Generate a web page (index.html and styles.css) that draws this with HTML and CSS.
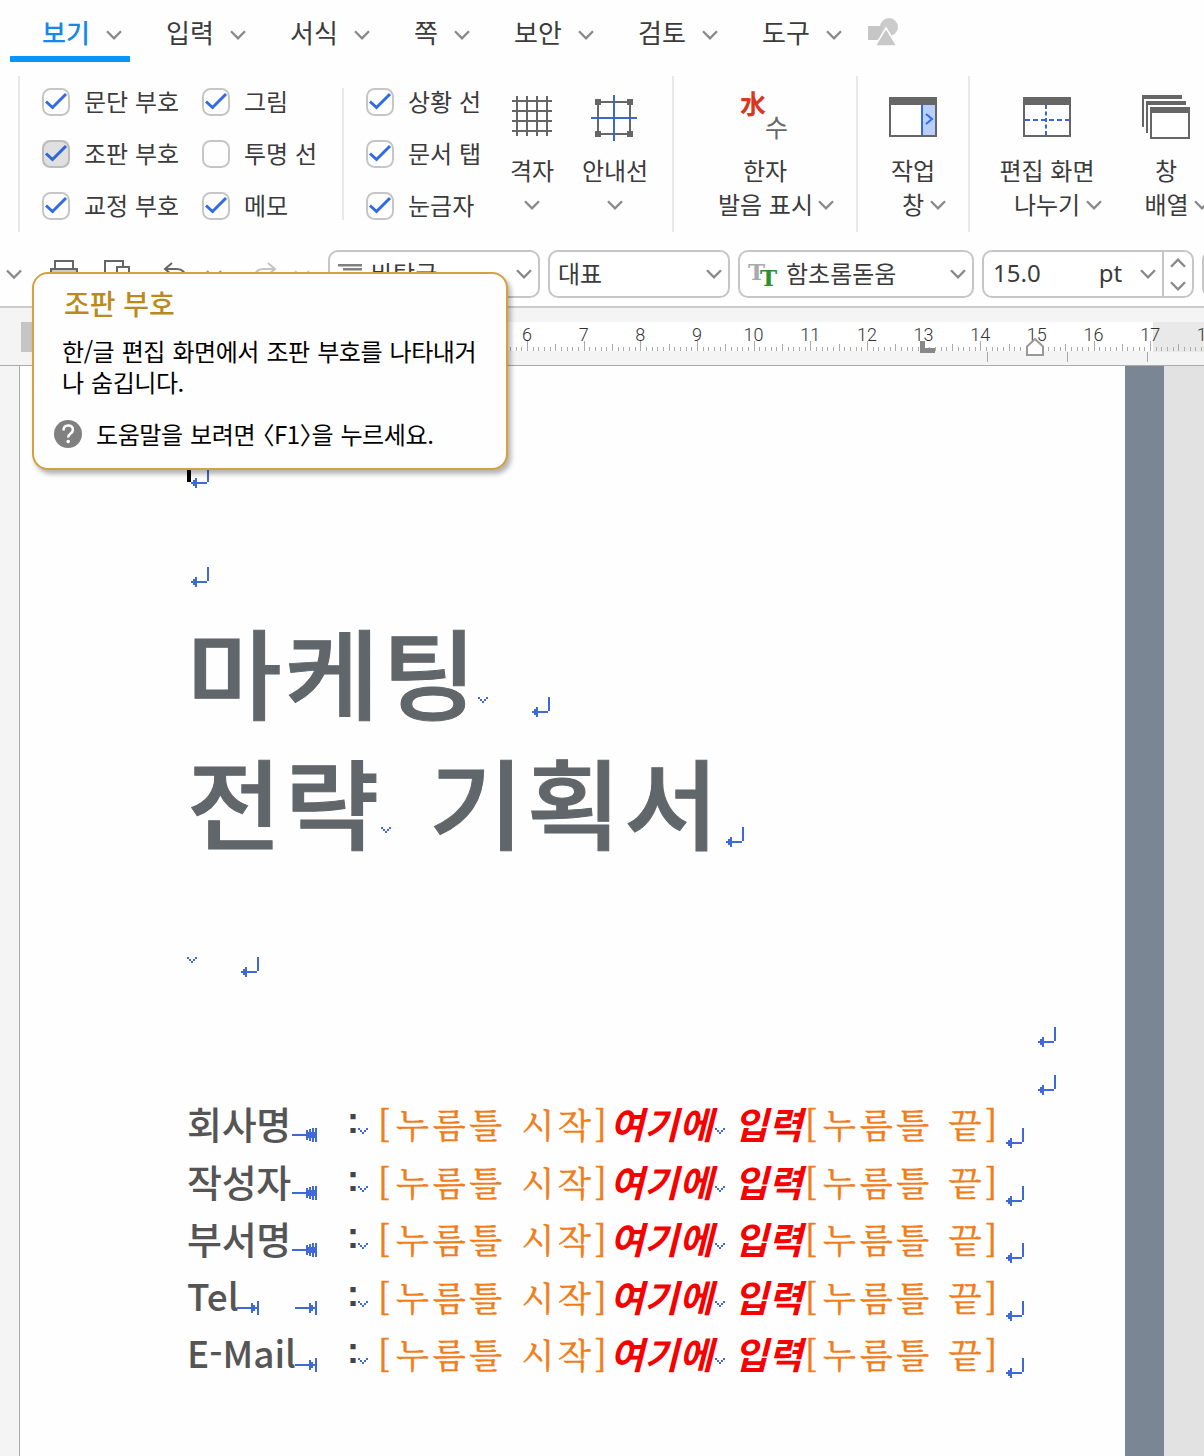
FILE: index.html
```html
<!DOCTYPE html>
<html lang="ko">
<head>
<meta charset="utf-8">
<title>한글</title>
<link rel="stylesheet" href="styles.css">
</head>
<body>
<svg class="defs" width="0" height="0">
  <symbol id="chev" viewBox="0 0 16 10"><path d="M1 1.3 8 8.3 15 1.3" fill="none" stroke="#888" stroke-width="2.3"/></symbol>
  <symbol id="box" viewBox="0 0 28 28"><rect x="1" y="1" width="26" height="26" rx="7.5" fill="none" stroke="#c6c6c6" stroke-width="2"/></symbol>
  <symbol id="check" viewBox="0 0 28 28"><path d="M4 13.5 10.5 19.5 24 6" fill="none" stroke="#2f6be8" stroke-width="3"/></symbol>
  <symbol id="ret" viewBox="0 0 18 20"><path d="M16 0h2v14h-2zM6 14h10v2H6zM0 14h2v-2h2v-2h2v10H4v-2H2v-2H0z" fill="#3f68d8"/></symbol>
  <symbol id="sp" viewBox="0 0 10 6"><path d="M0 0h2v2H0zM2 2h2v2H2zM4 4h2v2H4zM6 2h2v2H6zM8 0h2v2H8z" fill="#3f68d8"/></symbol>
  <symbol id="tab" viewBox="0 0 22 14"><path d="M0 6h20v2H0zM20 0h2v14h-2zM14 2h2v2h2v2h1v2h-1v2h-2v2h-2z" fill="#3f68d8"/></symbol>
  <symbol id="tabs" viewBox="0 0 25 14"><path d="M0 6h25v2H0zM23 0h2v14h-2zM20 0h2v14h-2zM14 2h2v10h-2zM17 1h2v12h-2zM16 4h7v6h-7z" fill="#3f68d8"/></symbol>
</svg>

<nav class="menu">
  <div class="tab active"><span>보기</span><svg class="chev"><use href="#chev"/></svg></div>
  <div class="tab"><span>입력</span><svg class="chev"><use href="#chev"/></svg></div>
  <div class="tab"><span>서식</span><svg class="chev"><use href="#chev"/></svg></div>
  <div class="tab narrow"><span>쪽</span><svg class="chev"><use href="#chev"/></svg></div>
  <div class="tab"><span>보안</span><svg class="chev"><use href="#chev"/></svg></div>
  <div class="tab"><span>검토</span><svg class="chev"><use href="#chev"/></svg></div>
  <div class="tab"><span>도구</span><svg class="chev"><use href="#chev"/></svg></div>
  <svg class="shapes" viewBox="0 0 30 28"><circle cx="21" cy="9" r="9" fill="#cbcbcb"/><path d="M0 8h14v14H0z" fill="#c6c6c6"/><path d="M18 10 29 28H7z" fill="#c8c8c8" stroke="#fff" stroke-width="1.500"/></svg>
</nav>

<section class="ribbon">
  <div class="group checks">
    <div class="col c1">
      <label><svg class="cb"><use href="#box"/><use href="#check"/></svg>문단 부호</label>
      <label><svg class="cb hover"><use href="#box"/><use href="#check"/></svg>조판 부호</label>
      <label><svg class="cb"><use href="#box"/><use href="#check"/></svg>교정 부호</label>
    </div>
    <div class="col c2">
      <label><svg class="cb"><use href="#box"/><use href="#check"/></svg>그림</label>
      <label><svg class="cb"><use href="#box"/></svg>투명 선</label>
      <label><svg class="cb"><use href="#box"/><use href="#check"/></svg>메모</label>
    </div>
    <div class="col c3">
      <label><svg class="cb"><use href="#box"/><use href="#check"/></svg>상황 선</label>
      <label><svg class="cb"><use href="#box"/><use href="#check"/></svg>문서 탭</label>
      <label><svg class="cb"><use href="#box"/><use href="#check"/></svg>눈금자</label>
    </div>
    <div class="btn grid">
      <svg width="48" height="48"><path d="M4 9h40M4 19h40M4 29h40M4 39h40M9 4v40M19 4v40M29 4v40M39 4v40" stroke="#666" stroke-width="2"/></svg>
      <p>격자</p><p><svg class="chev"><use href="#chev"/></svg></p>
    </div>
    <div class="btn guide">
      <svg width="48" height="48"><path d="M7 10h32v32H7z" fill="none" stroke="#666" stroke-width="2"/><path d="M4 7h6v6H4zM36 7h6v6h-6zM4 39h6v6H4zM36 39h6v6h-6z" fill="#666"/><path d="M0 26h46M23 3v46" stroke="#3a66d8" stroke-width="2"/></svg>
      <p>안내선</p><p><svg class="chev"><use href="#chev"/></svg></p>
    </div>
  </div>
  <div class="group hanja">
    <div class="btn">
      <svg width="52" height="48"><text x="1" y="22" class="han">水</text><text x="26" y="45" class="su">수</text></svg>
      <p>한자</p><p class="wide">발음 표시<svg class="chev"><use href="#chev"/></svg></p>
    </div>
  </div>
  <div class="group work">
    <div class="btn">
      <svg width="48" height="48"><path d="M1 6h46v38H1z" fill="#fff" stroke="#666" stroke-width="2"/><path d="M32 12h14v31H32z" fill="#b7cffb"/><path d="M0 5h48v8H0z" fill="#666"/><path d="M33 13v30" stroke="#3a66d8" stroke-width="2"/><path d="M37 22l6 5-6 5" fill="none" stroke="#2f6be8" stroke-width="2"/></svg>
      <p>작업</p><p class="second">창<svg class="chev"><use href="#chev"/></svg></p>
    </div>
  </div>
  <div class="group windows">
    <div class="btn split">
      <svg width="48" height="48"><path d="M1 6h46v38H1z" fill="#fff" stroke="#666" stroke-width="2"/><path d="M0 5h48v8H0z" fill="#666"/><path d="M2 28h44" stroke="#3a66d8" stroke-width="2" stroke-dasharray="5 3"/><path d="M23 13v30" stroke="#3a66d8" stroke-width="2" stroke-dasharray="4 2.500"/></svg>
      <p>편집 화면</p><p class="second">나누기<svg class="chev"><use href="#chev"/></svg></p>
    </div>
    <div class="btn arrange">
      <svg width="48" height="48"><path d="M0 3h40v4H2v28H0zM4 9h40v4H6v28H4z" fill="#666"/><path d="M9 16h38v30H9z" fill="#fff" stroke="#666" stroke-width="2"/><path d="M8 15h40v6H8z" fill="#666"/></svg>
      <p>창</p><p class="second">배열<svg class="chev"><use href="#chev"/></svg></p>
    </div>
  </div>
</section>

<section class="toolbar">
  <div class="quick">
    <svg width="320" height="48" fill="none" stroke="#666" stroke-width="2">
      <path d="M7 20.500 14 27.500 21 20.500" stroke="#888" stroke-width="2.300"/>
      <path d="M55 19v-8h18v8"/><path d="M51 36V19h26v17z" fill="#ccc"/>
      <path d="M105 36V11h18v6M117 17h12v25h-12z"/>
      <path d="M172 13l-7 6 7 6M165 19h12q8 0 9 10"/>
      <path d="M207 21l7 7 7-7" stroke="#999"/>
      <path d="M268 13l7 6-7 6M275 19h-12q-8 0-9 10" stroke="#c4c4c4"/>
      <path d="M295 21l7 7 7-7" stroke="#ccc"/>
    </svg>
  </div>
  <div class="combo style"><svg width="26" height="24"><path d="M0 2h24v2.500H0zM5 6h19v2.500H5zM8 10h16v2.500H8zM5 14h19v2.500H5z" fill="#808080"/></svg><span>바탕글</span><svg class="chev"><use href="#chev"/></svg></div>
  <div class="combo lang"><span>대표</span><svg class="chev"><use href="#chev"/></svg></div>
  <div class="combo font"><svg width="30" height="28"><text x="0" y="20" class="tt" fill="#aaa">T</text><text x="12" y="26" class="tt" fill="#2c922c">T</text></svg><span>함초롬돋움</span><svg class="chev"><use href="#chev"/></svg></div>
  <div class="combo size"><span>15.0</span><span class="unit">pt</span><svg class="chev"><use href="#chev"/></svg><div class="spin"><svg class="chev up"><use href="#chev"/></svg><svg class="chev"><use href="#chev"/></svg></div></div>
  <div class="combo next"></div>
</section>

<svg class="ruler" id="ruler" width="1204" height="57">
  <rect x="21" y="14" width="20" height="30" fill="#c5c5c5"/>
  <rect x="41" y="14" width="1112" height="29" fill="#fff"/>
  <rect x="1153" y="14" width="51" height="30" fill="#e9e9e9"/>
  <g id="ticks"></g>
  <path d="M987.500 44v10M1067.500 44v10M1147.500 44v10" stroke="#aaa"/>
  <path d="M920 33h5v7h10v5h-15z" fill="#888"/>
  <path d="M1035 31l8 7.500v8.500h-16v-8.500z" fill="#fff" stroke="#999" stroke-width="2"/>
</svg>

<main class="work-area">
  <article class="page">
    <div class="line l1"><i class="caret"></i><svg class="ret"><use href="#ret"/></svg></div>
    <div class="line l2"><svg class="ret"><use href="#ret"/></svg></div>
    <div class="line title"><h1 class="t1">마케팅</h1><svg class="sp"><use href="#sp"/></svg><svg class="ret g1"><use href="#ret"/></svg></div>
    <div class="line title"><h1 class="t2">전략</h1><svg class="sp s2"><use href="#sp"/></svg><h1 class="t3">기획서</h1><svg class="ret"><use href="#ret"/></svg></div>
    <div class="line title"><svg class="sp"><use href="#sp"/></svg><svg class="ret g2"><use href="#ret"/></svg></div>
    <div class="line right"><svg class="ret"><use href="#ret"/></svg></div>
    <div class="line right"><svg class="ret"><use href="#ret"/></svg></div>

    <div class="line info"><div class="label"><b>회사명</b><svg class="tabs"><use href="#tabs"/></svg></div><b class="colon">:</b><svg class="sp"><use href="#sp"/></svg><span class="field begin"><u>[</u>누름틀 시작<u>]</u></span><em class="e1">여기에</em><svg class="sp"><use href="#sp"/></svg><em class="e2">입력</em><span class="field end"><u>[</u>누름틀 끝<u>]</u></span><svg class="ret"><use href="#ret"/></svg></div>
    <div class="line info"><div class="label"><b>작성자</b><svg class="tabs"><use href="#tabs"/></svg></div><b class="colon">:</b><svg class="sp"><use href="#sp"/></svg><span class="field begin"><u>[</u>누름틀 시작<u>]</u></span><em class="e1">여기에</em><svg class="sp"><use href="#sp"/></svg><em class="e2">입력</em><span class="field end"><u>[</u>누름틀 끝<u>]</u></span><svg class="ret"><use href="#ret"/></svg></div>
    <div class="line info"><div class="label"><b>부서명</b><svg class="tabs"><use href="#tabs"/></svg></div><b class="colon">:</b><svg class="sp"><use href="#sp"/></svg><span class="field begin"><u>[</u>누름틀 시작<u>]</u></span><em class="e1">여기에</em><svg class="sp"><use href="#sp"/></svg><em class="e2">입력</em><span class="field end"><u>[</u>누름틀 끝<u>]</u></span><svg class="ret"><use href="#ret"/></svg></div>
    <div class="line info"><div class="label"><b class="latin tel">Tel</b><svg class="tabm"><use href="#tab"/></svg><svg class="tabm last"><use href="#tab"/></svg></div><b class="colon">:</b><svg class="sp"><use href="#sp"/></svg><span class="field begin"><u>[</u>누름틀 시작<u>]</u></span><em class="e1">여기에</em><svg class="sp"><use href="#sp"/></svg><em class="e2">입력</em><span class="field end"><u>[</u>누름틀 끝<u>]</u></span><svg class="ret"><use href="#ret"/></svg></div>
    <div class="line info"><div class="label"><b class="latin mail">E-Mail</b><svg class="tabm last"><use href="#tab"/></svg></div><b class="colon">:</b><svg class="sp"><use href="#sp"/></svg><span class="field begin"><u>[</u>누름틀 시작<u>]</u></span><em class="e1">여기에</em><svg class="sp"><use href="#sp"/></svg><em class="e2">입력</em><span class="field end"><u>[</u>누름틀 끝<u>]</u></span><svg class="ret"><use href="#ret"/></svg></div>
  </article>
  <div class="band"></div>
</main>

<aside class="tooltip">
  <h2>조판 부호</h2>
  <p>한/글 편집 화면에서 조판 부호를 나타내거<br>나 숨깁니다.</p>
  <div class="help"><svg width="28" height="28"><circle cx="14" cy="14" r="14" fill="#808080"/><path d="M9.500 10.500q0-5 4.700-5t4.700 4.300q0 2.300-2.600 4-2.100 1.500-2.100 3.700" fill="none" stroke="#fff" stroke-width="2.500"/><circle cx="14.200" cy="21.500" r="1.800" fill="#fff"/></svg><span>도움말을 보려면 <s>〈</s>F1<s>〉</s>을 누르세요.</span></div>
</aside>
<script src="ruler.js"></script>
</body>
</html>
```
FILE: styles.css
```css
* { box-sizing: border-box; margin: 0; padding: 0; }
body {
  width: 1204px; height: 1456px; overflow: hidden; position: relative;
  background: #fefefe; color: #3b3b3b;
  font: 24px/32px "Noto Sans CJK KR", sans-serif;
  display: flex; flex-direction: column;
}
svg { flex: none; display: block; overflow: visible; }
.defs { position: absolute; }
.chev { width: 16px; height: 10px; }

.menu { height: 62px; flex: none; display: flex; gap: 4px; padding-left: 10px; font-size: 26px; }
.tab { width: 120px; height: 62px; padding: 6px 8px 0 32px; display: flex; align-items: center; justify-content: space-between; border-bottom: 6px solid transparent; }
.tab span { line-height: 46px; margin-top: 2px; }
.tab .chev { margin-top: 7px; }
.narrow { width: 96px; }
.active { border-color: #0b94f7; }
.active span { color: #1389ea; font-weight: 500; }
.shapes { width: 30px; height: 28px; margin: 18px 0 0 14px; }

.ribbon { height: 170px; margin-top: 14px; margin-bottom: -6px; flex: none; display: flex; padding-left: 18px; }
.group { height: 156px; border-left: 2px solid #e8e8e8; display: flex; flex: none; }
.checks { width: 654px; }
.hanja { width: 184px; }
.work { width: 112px; }
.windows { width: 234px; }
.col { display: flex; flex-direction: column; gap: 24px; padding-top: 12px; flex: none; }
.col label { height: 28px; line-height: 26px; display: flex; gap: 14px; white-space: nowrap; }
.cb { width: 28px; height: 28px; }
.hover { background: #ececec; border-radius: 8px; filter: brightness(.95); }
.c1 { width: 182px; padding-left: 22px; }
.c2 { width: 140px; }
.c3 { width: 162px; height: 132px; margin-top: 12px; padding: 0 0 0 22px; border-left: 2px solid #e8e8e8; }
.btn { display: flex; flex-direction: column; align-items: center; padding-top: 16px; white-space: nowrap; flex: none; }
.btn p { height: 33px; line-height: 33px; display: flex; align-items: center; gap: 6px; }
.btn > svg + p { margin-top: 13px; margin-bottom: 1px; }
.btn p .chev { margin-top: 3px; }
.grid { width: 56px; }
.guide { width: 110px; }
.hanja .btn { width: 130px; margin-left: 26px; }
.hanja .wide { margin-left: 22px; gap: 5px; }
.work .btn { width: 110px; }
.work .second { margin-left: 22px; }
.split { width: 154px; }
.split .second { margin-left: 22px; }
.arrange { width: 84px; }
.arrange .second { margin-left: 22px; gap: 5px; }
.han { font-size: 26px; font-weight: 700; fill: #d9371f; }
.su { font-size: 25px; fill: #666; }

.toolbar { height: 68px; flex: none; border-bottom: 2px solid #cbcbcb; padding-top: 10px; display: flex; gap: 8px; }
.quick { width: 320px; }
.combo { height: 48px; border: 2px solid #c6c6c6; border-radius: 10px; background: #fff; display: flex; align-items: center; flex: none; padding: 0 6px 0 8px; }
.combo span { margin-top: -2px; }
.combo > .chev { margin-left: auto; }
.style { width: 212px; padding-right: 6px; }
.style svg:first-child { margin: 0 7px 0 0; }
.lang { width: 182px; }
.font { width: 236px; }
.font svg:first-child { margin-right: 8px; }
.tt { font: 700 23px "DejaVu Serif", serif; }
.size { width: 212px; padding: 0; font-family: "Noto Sans", sans-serif; }
.size span { margin-left: 9px; }
.size .unit { margin-left: 58px; }
.size > .chev { margin-right: 6px; }
.spin { width: 30px; height: 44px; border-left: 2px solid #c6c6c6; display: flex; flex-direction: column; align-items: center; justify-content: space-between; padding: 6px 0 5px; }
.up { transform: scaleY(-1); }
.next { width: 30px; }

.ruler { flex: none; background: #f4f4f4; overflow: hidden; }
.ruler text { font: 300 18px "Roboto", sans-serif; fill: #333; text-anchor: middle; }

.work-area { height: 1091px; flex: none; background: #e2e2e2; display: flex; padding-left: 19px; border-top: 1px solid #aaa; box-shadow: inset 19px 0 #f4f4f4; }
.page { width: 1106px; flex: none; background: #fefefe; border-left: 1px solid #aaa; padding: 102px 0 0 167px; }
.band { width: 39px; background: #7b8694; }
.line { display: flex; align-items: flex-start; }
.line svg { shape-rendering: crispEdges; }
.ret { width: 18px; height: 20px; }
.sp { width: 10px; height: 6px; }
.l1 { height: 99px; }
.caret { width: 4px; height: 14px; background: #000; }
.l2 { height: 42px; padding-left: 4px; }
.title { height: 130px; }
.title > svg { margin-top: 88px; }
h1 { font-size: 98px; line-height: 130px; font-weight: 500; color: #61666a; letter-spacing: 2.7px; white-space: nowrap; margin-top: -5px; -webkit-text-stroke: 1px #61666a; transform: scaleX(1.05); transform-origin: 0 0; }
.t1 { width: 291px; }
.title .g1, .title .g2 { margin-left: 44px; }
.t2 { width: 194px; }
.t3 { width: 297px; margin-left: 38px; }
.right { height: 48px; padding: 28px 0 0 851px; }
.info { height: 57.5px; font-size: 38px; line-height: 57px; }
.info > svg { margin-top: 33px; }
.label { width: 161px; height: 57px; display: flex; color: #555; }
.label b { font-weight: 500; width: 105px; margin-top: -1px; white-space: nowrap; letter-spacing: -.3px; }
.label svg { margin-top: 33px; }
.tabs { width: 25px; height: 14px; }
.tabm { width: 22px; height: 14px; }
.label .latin { letter-spacing: 0; font-size: 37px; }
.label .tel { width: 50px; }
.label .mail { width: 108px; }
.tel + svg + svg { margin-left: 36px; }
.colon { width: 11px; margin-left: -1px; color: #444; font: 700 36px/57px "Liberation Sans", sans-serif; margin-top: -3px; }
.field { font-family: "Noto Serif CJK KR", "Noto Sans CJK KR", serif; font-weight: 400; color: #f07d18; font-size: 34px; letter-spacing: 3.8px; word-spacing: 1.2px; white-space: nowrap; flex: none; margin-top: 0; -webkit-text-stroke: .5px #f07d18; }
.field u { display: inline-block; width: 18px; text-decoration: none; letter-spacing: 0; }
.begin { width: 233px; margin-left: 10px; }
.begin u:first-child, .end u:first-child { text-indent: 0; }
.end { width: 201px; }
em { color: #f60000; font-weight: 700; font-size: 37px; letter-spacing: .4px; white-space: nowrap; margin-left: -1px; }
.e1 { width: 105px; }
.info .e2 { width: 71px; margin-left: 9px; }

.tooltip { position: absolute; left: 32px; top: 272px; width: 476px; height: 198px; border: 2px solid #d4a040; border-radius: 16px; background: #fefefe; box-shadow: 3px 4px 5px rgba(0,0,0,.3); color: #000; padding: 11px 0 0 28px; }
h2 { font-size: 28px; line-height: 36px; font-weight: 500; color: #b98a1c; margin-left: 2px; }
.tooltip p { line-height: 31px; margin-top: 14px; letter-spacing: -.45px; word-spacing: 1.2px; white-space: nowrap; }
.help { display: flex; margin: 23px 0 0 -8px; gap: 14px; white-space: nowrap; letter-spacing: -.4px; word-spacing: 1px; }
.help span { line-height: 28px; }
s { text-decoration: none; font-feature-settings: "halt"; }
```
FILE: ruler.js
```javascript
const STEP = 56.65;
const ORIGIN = 527.5 - 6 * STEP;
const NS = "http://www.w3.org/2000/svg";
const layer = document.getElementById("ticks");
let d = "";
for (let i = -20; i <= 180; i++) {
  const x = Math.round(ORIGIN + i * STEP / 10 - 0.5) + 0.5;
  const len = i % 10 === 0 ? 10 : i % 5 === 0 ? 7 : 4;
  d += `M${x} ${43 - len}v${len}`;
}
const path = document.createElementNS(NS, "path");
path.setAttribute("d", d);
path.setAttribute("stroke", "#aaa");
layer.appendChild(path);
for (let n = 6; n <= 18; n++) {
  const t = document.createElementNS(NS, "text");
  t.setAttribute("x", ORIGIN + n * STEP - 0.5);
  t.setAttribute("y", 33);
  t.textContent = n;
  layer.appendChild(t);
}
```
